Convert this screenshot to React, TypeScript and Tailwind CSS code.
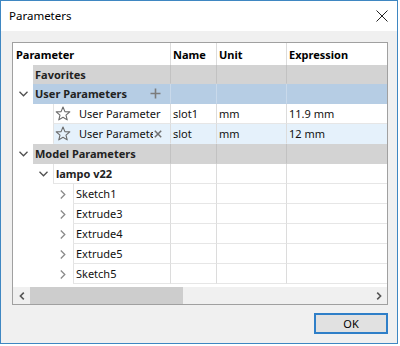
import React from "react";

type Row = {
  label: string;
  level: number;
  kind?: "gray" | "blue" | "light" | "white";
  bold?: boolean;
  chevron?: "down" | "right";
  star?: boolean;
  plus?: boolean;
  x?: boolean;
  name?: string;
  unit?: string;
  expr?: string;
  h?: string;
};

const rows: Row[] = [
  { label: "Favorites", level: 0, kind: "gray", bold: true, h: "h-[19px]" },
  { label: "User Parameters", level: 0, kind: "blue", bold: true, chevron: "down", plus: true },
  { label: "User Parameter", level: 1, star: true, name: "slot1", unit: "mm", expr: "11.9 mm" },
  { label: "User Parameter", level: 1, star: true, name: "slot", unit: "mm", expr: "12 mm", kind: "light", x: true },
  { label: "Model Parameters", level: 0, kind: "gray", bold: true, chevron: "down" },
  { label: "lampo v22", level: 1, bold: true, chevron: "down" },
  { label: "Sketch1", level: 2, chevron: "right" },
  { label: "Extrude3", level: 2, chevron: "right" },
  { label: "Extrude4", level: 2, chevron: "right" },
  { label: "Extrude5", level: 2, chevron: "right" },
  { label: "Sketch5", level: 2, chevron: "right" },
];

const bgFor = (k?: string) =>
  k === "gray"
    ? "bg-[#d3d3d3] border-b-[#d3d3d3]"
    : k === "blue"
    ? "bg-[#b6cde4] border-b-[#b6cde4]"
    : k === "light"
    ? "bg-[#e5f1fb] border-b-[#e5f1fb]"
    : "bg-white border-b-[#e6e6e6]";

const vline = (k?: string) =>
  k === "gray" ? "border-l-[#c2c2c2]" : k === "blue" ? "border-l-[#c9d9ea]" : "border-l-[#dcdcdc]";

function ChevronDown() {
  return (
    <svg width="9" height="6" viewBox="0 0 9 6">
      <path d="M0.5 0.8 L4.5 4.8 L8.5 0.8" fill="none" stroke="#505050" strokeWidth="1.3" />
    </svg>
  );
}
function ChevronRight() {
  return (
    <svg width="6" height="9" viewBox="0 0 6 9">
      <path d="M0.8 0.5 L4.8 4.5 L0.8 8.5" fill="none" stroke="#8a8a8a" strokeWidth="1.3" />
    </svg>
  );
}
function Star() {
  return (
    <svg width="16" height="15" viewBox="0 0 16 15">
      <path
        d="M8 1 L9.9 5.6 L14.8 5.9 L11 9.1 L12.2 13.9 L8 11.3 L3.8 13.9 L5 9.1 L1.2 5.9 L6.1 5.6 Z"
        fill="none"
        stroke="#6a6a6a"
        strokeWidth="1.1"
        strokeLinejoin="round"
      />
    </svg>
  );
}

export default function App() {
  return (
    <div
      className="w-[400px] h-[346px] bg-white"
      style={{ fontFamily: '"Noto Sans", "Open Sans", sans-serif' }}
    >
      <div className="w-[398px] h-[344px] border border-[#3f87c2] flex flex-col bg-[#f0f0f0]">
        {/* title bar */}
        <div className="h-[30px] bg-white flex items-center justify-between pl-[8px] pr-[9px] shrink-0">
          <span className="text-[11.5px] text-black leading-none">Parameters</span>
          <svg width="12" height="12" viewBox="0 0 12 12">
            <path d="M0.5 0.5 L11.5 11.5 M11.5 0.5 L0.5 11.5" stroke="#222" strokeWidth="1" />
          </svg>
        </div>
        {/* body */}
        <div className="flex-1 flex flex-col pl-[11px] pr-[9px] pt-[11px]">
          <div className="w-[376px] h-[263px] border border-[#a0a0a0] bg-white flex flex-col text-[11px] text-[#111] leading-none">
            {/* header */}
            <div className="flex h-[22px] font-bold text-black">
              <div className="w-[157px] flex items-center pl-[3px]">Parameter</div>
              <div className="w-[46px] flex items-center pl-[2px] border-l border-l-[#dcdcdc]">Name</div>
              <div className="w-[70px] flex items-center pl-[2px] border-l border-l-[#dcdcdc]">Unit</div>
              <div className="flex-1 flex items-center pl-[2px] border-l border-l-[#dcdcdc]">Expression</div>
            </div>
            {rows.map((r, i) => (
              <div key={i} className={`flex ${r.h ?? "h-[20px]"}`}>
                <div className="w-[157px] flex">
                  {r.level > 0 && <div className="w-[20px] shrink-0" />}
                  {r.level > 1 && <div className="w-[20px] shrink-0" />}
                  <div className="w-[20px] shrink-0 flex items-center justify-center">
                    {r.chevron === "down" && <ChevronDown />}
                    {r.chevron === "right" && <ChevronRight />}
                  </div>
                  <div
                    className={`relative flex-1 flex items-center overflow-hidden border-b ${bgFor(r.kind)} ${
                      r.level > 0 ? "border-l border-l-[#e3e3e3]" : ""
                    } ${r.star ? "pl-[1px]" : "pl-[2px]"} ${r.bold ? "font-bold text-[#222]" : ""}`}
                  >
                    {r.star && (
                      <span className="mr-[8px] flex">
                        <Star />
                      </span>
                    )}
                    <span className="whitespace-nowrap">{r.label}</span>
                    {r.plus && (
                      <svg className="absolute left-[117px] top-[4px]" width="11" height="11" viewBox="0 0 11 11">
                        <path d="M5.5 0.5 V10.5 M0.5 5.5 H10.5" stroke="#7c7c7c" strokeWidth="1.6" />
                      </svg>
                    )}
                    {r.x && (
                      <span className="absolute left-[99px] top-0 bottom-0 w-[20px] bg-[#e5f1fb] flex items-center pl-[1px]">
                        <svg width="8" height="8" viewBox="0 0 8 8">
                          <path d="M0.8 0.8 L7.2 7.2 M7.2 0.8 L0.8 7.2" stroke="#6e6e6e" strokeWidth="1.5" />
                        </svg>
                      </span>
                    )}
                  </div>
                </div>
                <div className={`w-[46px] flex items-center pl-[2px] border-l border-b ${vline(r.kind)} ${bgFor(r.kind)}`}>
                  {r.name}
                </div>
                <div className={`w-[70px] flex items-center pl-[2px] border-l border-b ${vline(r.kind)} ${bgFor(r.kind)}`}>
                  {r.unit}
                </div>
                <div className={`flex-1 flex items-center pl-[2px] border-l border-b ${vline(r.kind)} ${bgFor(r.kind)}`}>
                  {r.expr}
                </div>
              </div>
            ))}
            <div className="flex-1" />
            {/* scrollbar */}
            <div className="h-[17px] flex bg-[#f0f0f0]">
              <div className="w-[17px] flex items-center justify-center">
                <svg width="6" height="8" viewBox="0 0 6 8">
                  <path d="M4.8 0.6 L1.4 4 L4.8 7.4" fill="none" stroke="#555" strokeWidth="1.6" />
                </svg>
              </div>
              <div className="w-[153px] bg-[#cdcdcd]" />
              <div className="flex-1" />
              <div className="w-[17px] flex items-center justify-center">
                <svg width="6" height="8" viewBox="0 0 6 8">
                  <path d="M1.2 0.6 L4.6 4 L1.2 7.4" fill="none" stroke="#555" strokeWidth="1.6" />
                </svg>
              </div>
            </div>
          </div>
          <div className="flex justify-end mt-[8px]">
            <div className="w-[74px] h-[21px] border-2 border-[#2f7fc8] bg-[#e1e1e1] flex items-center justify-center text-[11px] text-black leading-none">
              OK
            </div>
          </div>
        </div>
      </div>
    </div>
  );
}
